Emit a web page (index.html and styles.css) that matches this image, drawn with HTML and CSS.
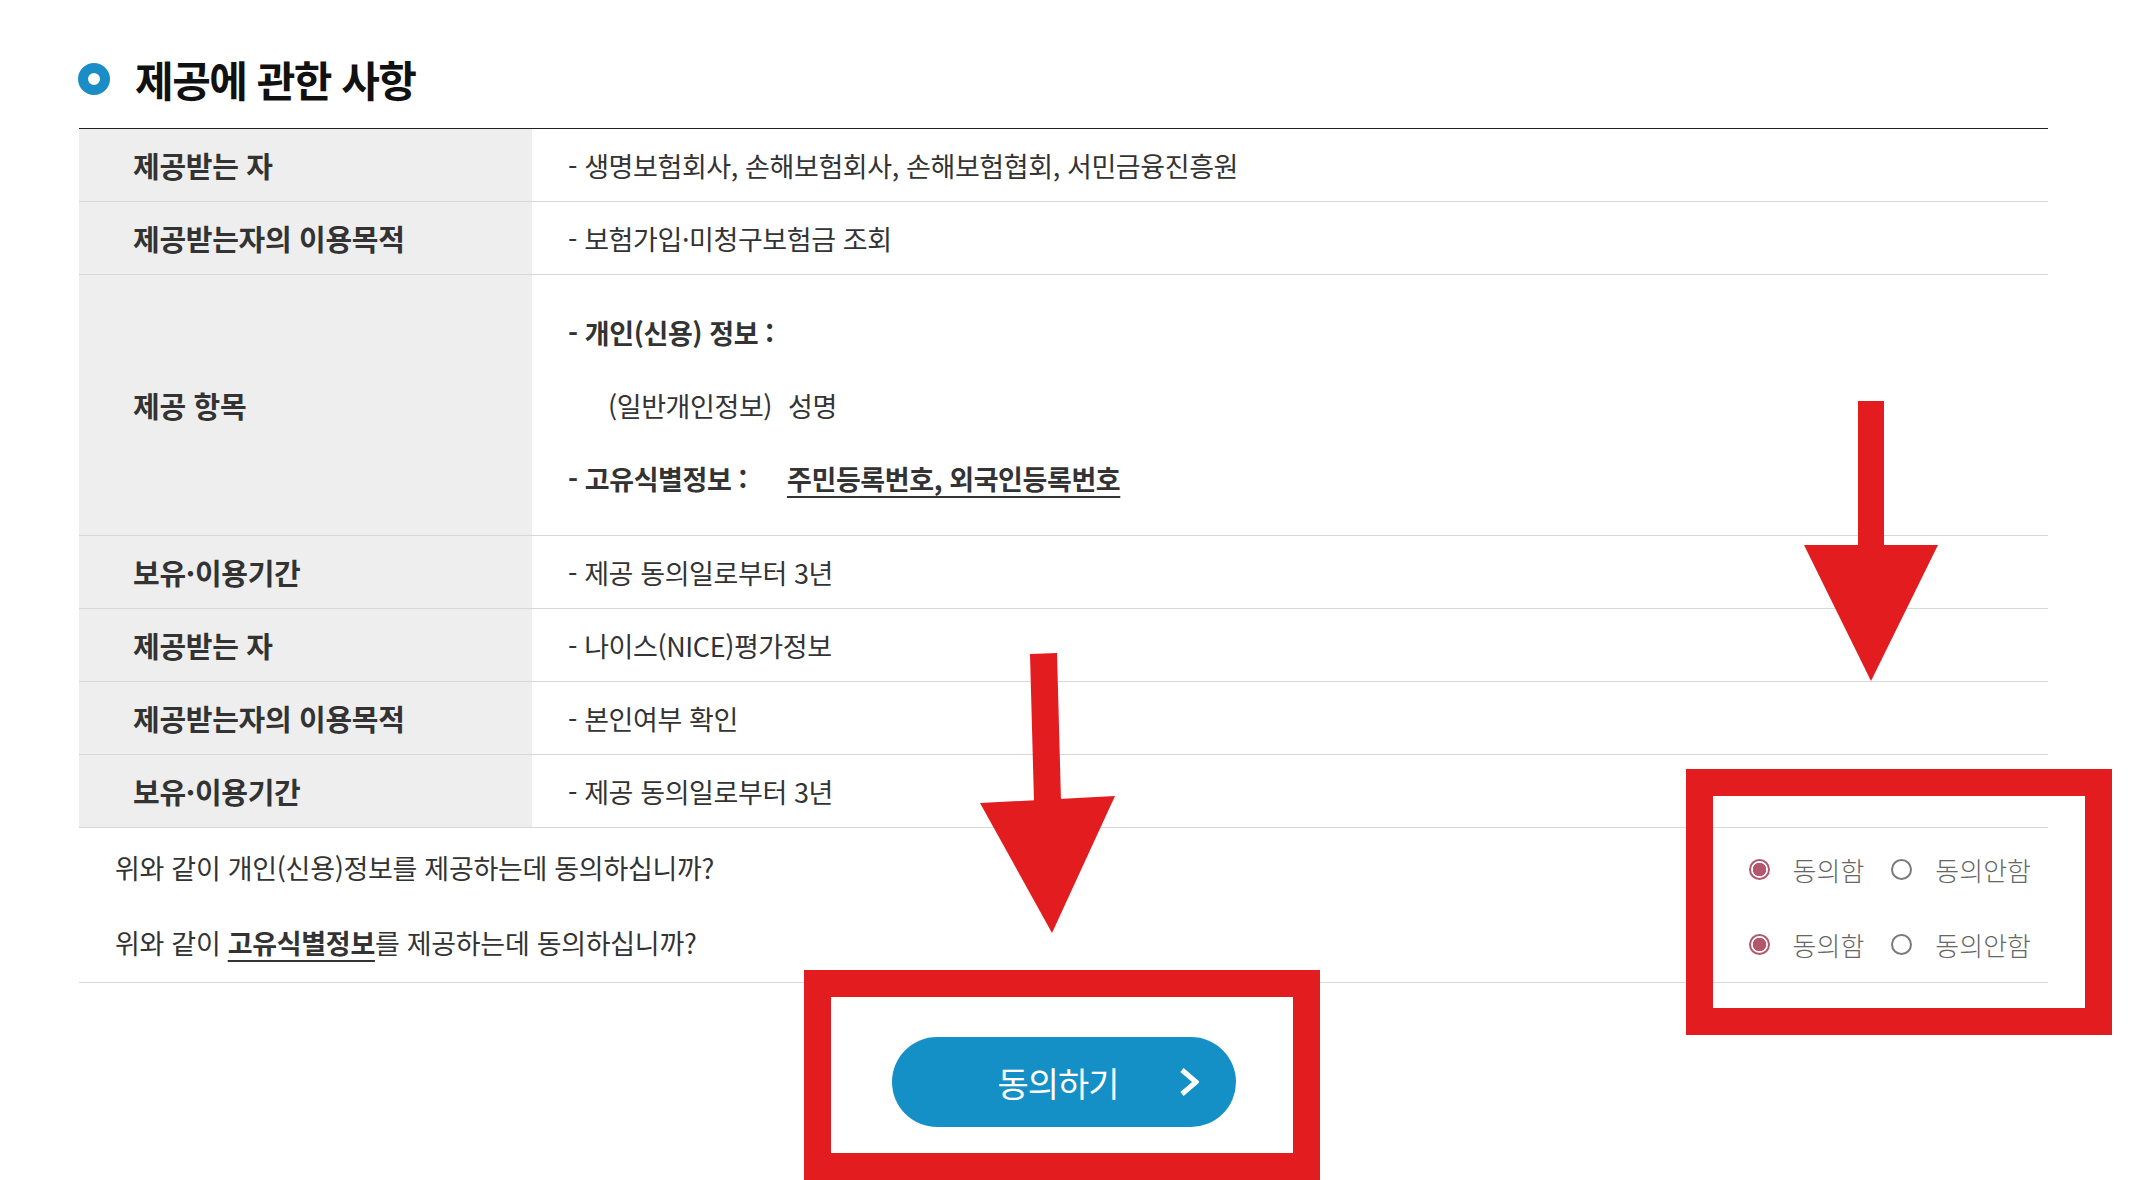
FILE: index.html
```html
<!DOCTYPE html>
<html lang="ko">
<head>
<meta charset="utf-8">
<title>제공에 관한 사항</title>
<link rel="stylesheet" href="styles.css">
</head>
<body>
<div class="page">
  <div class="heading">
    <span class="ring"></span>
    <h2 class="title">제공에 관한 사항</h2>
  </div>

  <div class="table">
    <div class="row">
      <div class="th">제공받는 자</div>
      <div class="td">- 생명보험회사, 손해보험회사, 손해보험협회, 서민금융진흥원</div>
    </div>
    <div class="row">
      <div class="th">제공받는자의 이용목적</div>
      <div class="td">- 보험가입·미청구보험금 조회</div>
    </div>
    <div class="row tall">
      <div class="th">제공 항목</div>
      <div class="td list">
        <div class="item"><span class="k b">- 개인(신용) 정보 :</span></div>
        <div class="item sub"><span class="k">(일반개인정보)</span><span>성명</span></div>
        <div class="item"><span class="k b">- 고유식별정보 :</span><span class="u b">주민등록번호, 외국인등록번호</span></div>
      </div>
    </div>
    <div class="row">
      <div class="th">보유·이용기간</div>
      <div class="td">- 제공 동의일로부터 3년</div>
    </div>
    <div class="row">
      <div class="th">제공받는 자</div>
      <div class="td">- 나이스(NICE)평가정보</div>
    </div>
    <div class="row">
      <div class="th">제공받는자의 이용목적</div>
      <div class="td">- 본인여부 확인</div>
    </div>
    <div class="row">
      <div class="th">보유·이용기간</div>
      <div class="td">- 제공 동의일로부터 3년</div>
    </div>
  </div>

  <div class="qa">
    <div class="qrow">
      <p class="q">위와 같이 개인(신용)정보를 제공하는데 동의하십니까?</p>
      <div class="radios">
        <span class="radio on"></span><span class="rlabel">동의함</span>
        <span class="radio"></span><span class="rlabel">동의안함</span>
      </div>
    </div>
    <div class="qrow">
      <p class="q">위와 같이 <strong class="u">고유식별정보</strong>를 제공하는데 동의하십니까?</p>
      <div class="radios">
        <span class="radio on"></span><span class="rlabel">동의함</span>
        <span class="radio"></span><span class="rlabel">동의안함</span>
      </div>
    </div>
  </div>

  <div class="btn-area">
    <button class="btn" type="button">
      <span class="btn-text">동의하기</span>
      <svg class="chev" width="20" height="30" viewBox="0 0 20 30"><polyline points="3,3 17,15 3,27" fill="none" stroke="#fff" stroke-width="5"/></svg>
    </button>
  </div>
</div>

<svg class="marks" width="2133" height="1180" viewBox="0 0 2133 1180">
  <g fill="#e31c1f">
    <rect x="1858" y="401" width="26" height="146"/>
    <polygon points="1804,545 1938,545 1871,681"/>
    <polygon points="1030,654 1057,653 1061,801 1034,802"/>
    <polygon points="980,803 1115,796 1052,933"/>
  </g>
  <g fill="none" stroke="#e31c1f" stroke-width="27">
    <rect x="1699.5" y="782.5" width="399" height="239"/>
    <rect x="817.5" y="983.5" width="489" height="183"/>
  </g>
</svg>
</body>
</html>
```

FILE: styles.css
```css
html, body {
  margin: 0;
  padding: 0;
  overflow: hidden;
  background: #fff;
}

body {
  position: relative;
  width: 2133px;
  height: 1180px;
  font-family: "Noto Sans CJK KR", "Noto Sans", sans-serif;
  color: #333;
}

.page {
  padding: 54px 85px 0 79px;
}

.heading {
  display: flex;
  align-items: center;
  gap: 25px;
  height: 50px;
  margin-bottom: 24px;
}

.ring {
  width: 32px;
  height: 32px;
  box-sizing: border-box;
  border: 10px solid #1a8dc6;
  border-radius: 50%;
  margin-left: -1px;
}

.title {
  margin: 0;
  font-size: 42px;
  font-weight: 700;
  letter-spacing: -1.5px;
  color: #111;
  line-height: 50px;
}

.table {
  border-top: 1px solid #222;
}

.row {
  display: grid;
  grid-template-columns: 453px 1fr;
  height: 72px;
  border-bottom: 1px solid #d8d8d8;
}

.row.tall {
  height: 260px;
}

.th {
  display: flex;
  align-items: center;
  background: #eeeeee;
  padding-left: 54px;
  font-size: 29px;
  font-weight: 700;
  color: #333;
  letter-spacing: -0.3px;
}

.td {
  display: flex;
  align-items: center;
  padding-left: 36px;
  font-size: 27px;
  color: #333;
  letter-spacing: -0.4px;
}

.td.list {
  flex-direction: column;
  align-items: flex-start;
  justify-content: center;
}

.item {
  line-height: 73px;
  white-space: nowrap;
}

.k {
  display: inline-block;
  width: 219px;
}

.sub {
  padding-left: 40px;
}

.sub .k {
  width: 180px;
}

.b {
  font-weight: 700;
}

.u {
  text-decoration: underline;
  text-decoration-thickness: 2px;
  text-underline-offset: 6px;
}

.qa {
  padding-top: 4px;
  border-bottom: 1px solid #d8d8d8;
}

.qrow {
  display: flex;
  align-items: center;
  justify-content: space-between;
  height: 75px;
  padding: 0 17px 0 36px;
}

.q {
  margin: 0 0 4px;
  font-size: 27px;
  color: #333;
  letter-spacing: -0.3px;
}

.q strong {
  font-weight: 700;
}

.radios {
  display: flex;
  align-items: center;
}

.radio {
  width: 21px;
  height: 21px;
  box-sizing: border-box;
  border: 2px solid #7a7a7a;
  border-radius: 50%;
  margin-right: 23px;
}

.radio.on {
  border-color: #b4566d;
  background: radial-gradient(circle, #b4566d 0 6.5px, #fff 7px);
}

.rlabel {
  font-size: 26px;
  font-weight: 300;
  color: #666;
}

.rlabel + .radio {
  margin-left: 27px;
}

.btn-area {
  display: flex;
  justify-content: center;
  padding-top: 54px;
}

.btn {
  display: flex;
  align-items: center;
  gap: 60px;
  width: 344px;
  height: 90px;
  padding: 0 0 0 106px;
  box-sizing: border-box;
  border: 0;
  border-radius: 45px;
  background: #1590c6;
  color: #fff;
  font-family: "Noto Sans CJK KR", sans-serif;
  font-size: 34px;
  letter-spacing: -1px;
}

.chev {
  display: block;
  flex: none;
}

.marks {
  position: absolute;
  top: 0;
  left: 0;
  pointer-events: none;
}
```
